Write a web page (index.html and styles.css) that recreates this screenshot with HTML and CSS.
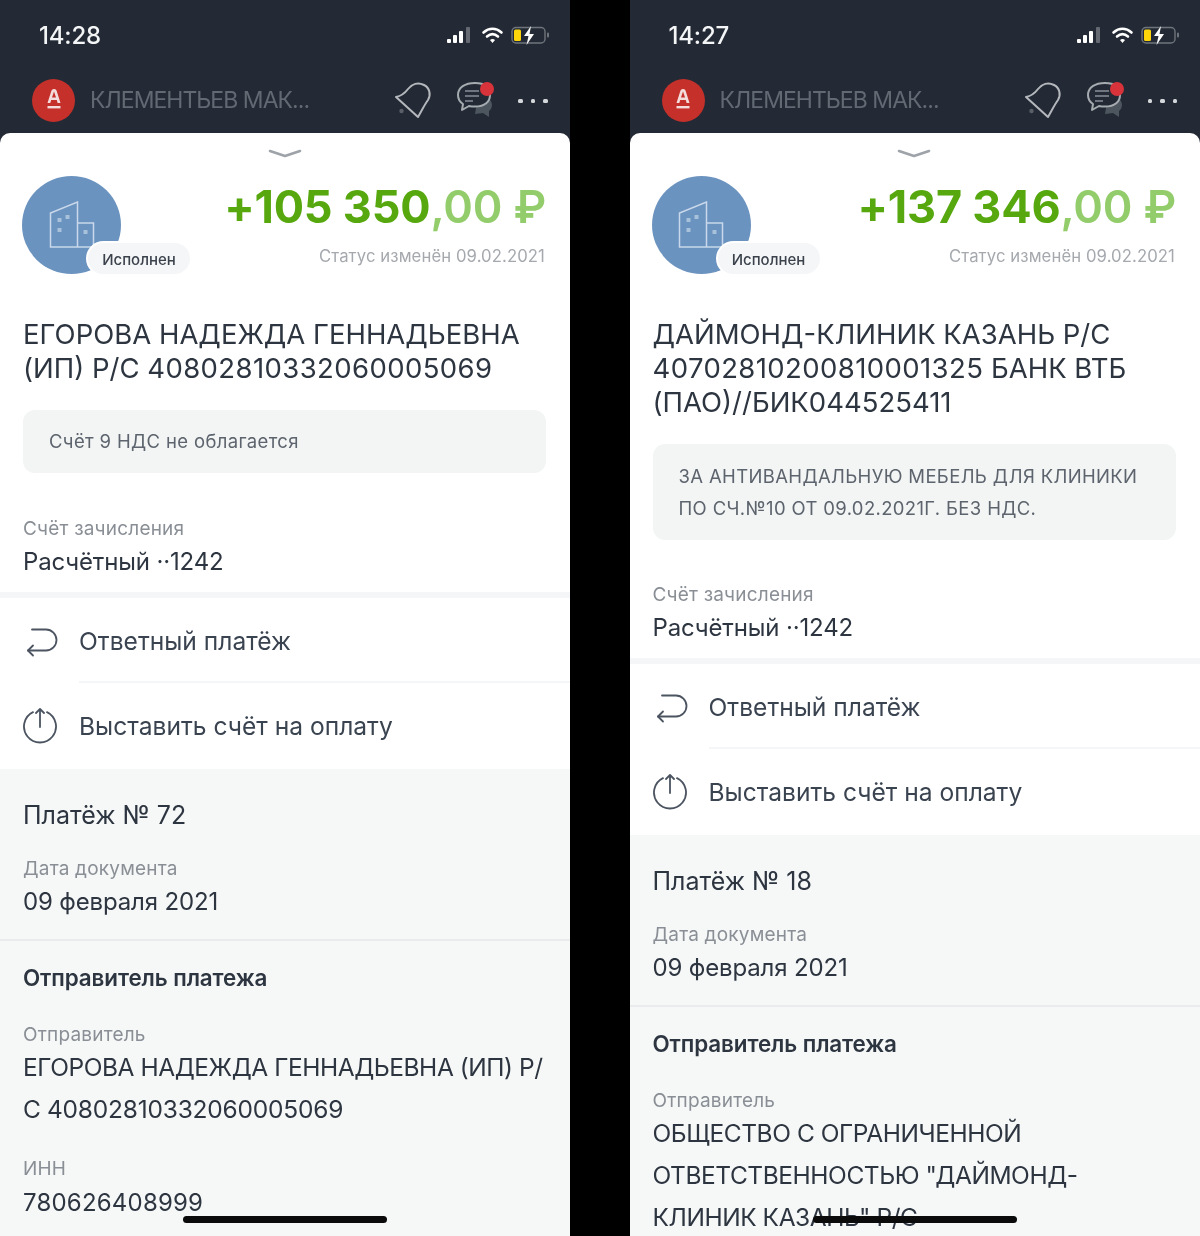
FILE: index.html
```html
<!DOCTYPE html>
<html lang="ru">
<head>
<meta charset="utf-8">
<title>Платежи</title>
<link rel="stylesheet" href="styles.css">
</head>
<body>
<main class="pair">

<section class="phone">
  <div class="top">
    <div class="status">
      <span class="time">14:28</span>
      <svg class="sysicons" width="106" height="24" viewBox="0 0 106 24"><g fill="#fff"><rect x="3" y="15" width="4" height="4" rx="1"/><rect x="9" y="11" width="4" height="8" rx="1"/><rect x="15" y="7" width="4" height="12" rx="1"/><rect x="22" y="3" width="4" height="16" rx="1" opacity=".3"/></g><g fill="none" stroke="#fff" stroke-width="2.6" stroke-linecap="round"><path d="M39.500 8.500c5.500-5 12.500-5 18 0"/><path d="M43 12.500c3.500-3 7.500-3 11 0"/></g><path d="M46 16c1.500-1.200 3.500-1.200 5 0l-2.500 3z" fill="#fff"/><rect x="68" y="3.500" width="33" height="15.500" rx="4" fill="none" stroke="#fff" stroke-opacity=".35" stroke-width="1.400"/><rect x="70" y="5.500" width="7" height="11.500" rx="1.500" fill="#ffd60a"/><path d="M87 2l-7 10h4.500l-2 9 7.500-11h-4.500z" fill="#fff"/><rect x="103" y="8.500" width="2" height="5" rx="1" fill="#fff" opacity=".35"/></svg>
    </div>
    <div class="bar">
      <span class="logo"><svg width="16" height="24" viewBox="0 0 16 24"><path d="M8 1c-2 0-2.600 1.500-3 3L1.500 15h2.800l.9-3h5.600l.8 3h2.900L11 4C10.500 2.300 10 1 8 1zM6 9.500 8 3.500l2 6z" fill="#f3dcdb"/><rect x="1.500" y="18" width="13" height="2.400" fill="#f3dcdb"/></svg></span>
      <span class="account">КЛЕМЕНТЬЕВ МАК...</span>
      <svg class="bell" width="38" height="38" viewBox="0 0 38 38" fill="none" stroke="#b4b8bd" stroke-width="2" stroke-linejoin="round"><path d="M2 16c5-1 9-4 12-8 4-5 10-7 16-4 6 3 7 10 4 15-3 4-6 10-10 17z"/><circle cx="7.500" cy="30" r="2.200" fill="#5b6068" stroke="none"/></svg>
      <span class="chat"><svg width="40" height="40" viewBox="0 0 40 40" fill="none"><path d="M22 16c8 0 14 3 14 9 0 3-1.500 5-3 6v6l-6-4-8 1z" fill="#4d555f"/><path d="M19 3C9 3 2 7.500 2 15c0 4 2 7 5 9l-1 6 7-4c2 .5 4 .6 6 .6 10 0 15-5 15-11.600C34 7.500 29 3 19 3z" fill="#232a35" stroke="#a6abb0" stroke-width="2" stroke-linejoin="round"/><path d="M9 11h14M9 16h14M9 21h8" stroke="#6f7680" stroke-width="2"/></svg><i class="dot"></i></span>
      <span class="dots"><i></i><i></i><i></i></span>
    </div>
  </div>
  <div class="sheet">
    <div class="main">
      <svg class="handle" width="34" height="10" viewBox="0 0 34 10" fill="none"><path d="M2 2l15 5 15-5" stroke="#9ea3a9" stroke-width="2.600" stroke-linecap="round" stroke-linejoin="round"/></svg>
      <div class="head">
        <div class="avatar">
          <svg width="46" height="48" viewBox="0 0 46 48" fill="none" stroke="#c9d8ea" stroke-width="1.500"><path d="M1.500 46V12L28.500 1v45zM28.500 22h16v24H1.500"/><g fill="#a9c2dc" stroke="none"><rect x="8.500" y="17" width="4" height="4"/><rect x="16.500" y="14" width="4" height="4"/><rect x="8.500" y="27" width="4" height="4"/><rect x="34.500" y="29" width="4" height="4"/></g></svg>
          <span class="badge">Исполнен</span>
        </div>
        <div class="sum">
          <div class="amount">+105 350<span class="minor">,00 ₽</span></div>
          <div class="changed">Статус изменён 09.02.2021</div>
        </div>
      </div>
      <h1 class="title">ЕГОРОВА НАДЕЖДА ГЕННАДЬЕВНА (ИП) Р/С <span class="num">40802810332060005069</span></h1>
      <div class="note">Счёт 9 НДС не облагается</div>
      <div class="field first"><span class="label">Счёт зачисления</span><span class="value">Расчётный ··1242</span></div>
    </div>
    <div class="actions">
      <div class="action">
        <svg width="34" height="34" viewBox="0 0 34 34" fill="none" stroke="#4b5460" stroke-width="1.800" stroke-linecap="round" stroke-linejoin="round"><path d="M9 5.500h14a10.500 10.500 0 0 1 0 21H5"/><path d="M10 21.500l-5 5 5 5"/></svg>
        <span>Ответный платёж</span>
      </div>
      <div class="action">
        <svg width="36" height="36" viewBox="0 0 36 36" fill="none" stroke="#4b5460" stroke-width="1.800" stroke-linecap="round" stroke-linejoin="round"><path d="M11 4.100A16 16 0 1 0 25 4.100"/><path d="M18 1v18M14 5l4-4 4 4"/></svg>
        <span>Выставить счёт на оплату</span>
      </div>
    </div>
    <div class="details">
      <div class="doc">
        <div class="docno">Платёж № 72</div>
        <div class="field"><span class="label">Дата документа</span><span class="value">09 февраля 2021</span></div>
      </div>
      <div class="sender">
        <h2 class="subhead">Отправитель платежа</h2>
        <span class="label">Отправитель</span>
        <div class="long">ЕГОРОВА НАДЕЖДА ГЕННАДЬЕВНА (ИП) Р/<br>С <span class="num">40802810332060005069</span></div>
        <span class="label inn">ИНН</span>
        <div class="value">780626408999</div>
      </div>
    </div>
  </div>
  <div class="home"></div>
</section>

<section class="phone">
  <div class="top">
    <div class="status">
      <span class="time">14:27</span>
      <svg class="sysicons" width="106" height="24" viewBox="0 0 106 24"><g fill="#fff"><rect x="3" y="15" width="4" height="4" rx="1"/><rect x="9" y="11" width="4" height="8" rx="1"/><rect x="15" y="7" width="4" height="12" rx="1"/><rect x="22" y="3" width="4" height="16" rx="1" opacity=".3"/></g><g fill="none" stroke="#fff" stroke-width="2.6" stroke-linecap="round"><path d="M39.500 8.500c5.500-5 12.500-5 18 0"/><path d="M43 12.500c3.500-3 7.500-3 11 0"/></g><path d="M46 16c1.500-1.200 3.500-1.200 5 0l-2.500 3z" fill="#fff"/><rect x="68" y="3.500" width="33" height="15.500" rx="4" fill="none" stroke="#fff" stroke-opacity=".35" stroke-width="1.400"/><rect x="70" y="5.500" width="7" height="11.500" rx="1.500" fill="#ffd60a"/><path d="M87 2l-7 10h4.500l-2 9 7.500-11h-4.500z" fill="#fff"/><rect x="103" y="8.500" width="2" height="5" rx="1" fill="#fff" opacity=".35"/></svg>
    </div>
    <div class="bar">
      <span class="logo"><svg width="16" height="24" viewBox="0 0 16 24"><path d="M8 1c-2 0-2.600 1.500-3 3L1.500 15h2.800l.9-3h5.600l.8 3h2.900L11 4C10.500 2.300 10 1 8 1zM6 9.500 8 3.500l2 6z" fill="#f3dcdb"/><rect x="1.500" y="18" width="13" height="2.400" fill="#f3dcdb"/></svg></span>
      <span class="account">КЛЕМЕНТЬЕВ МАК...</span>
      <svg class="bell" width="38" height="38" viewBox="0 0 38 38" fill="none" stroke="#b4b8bd" stroke-width="2" stroke-linejoin="round"><path d="M2 16c5-1 9-4 12-8 4-5 10-7 16-4 6 3 7 10 4 15-3 4-6 10-10 17z"/><circle cx="7.500" cy="30" r="2.200" fill="#5b6068" stroke="none"/></svg>
      <span class="chat"><svg width="40" height="40" viewBox="0 0 40 40" fill="none"><path d="M22 16c8 0 14 3 14 9 0 3-1.500 5-3 6v6l-6-4-8 1z" fill="#4d555f"/><path d="M19 3C9 3 2 7.500 2 15c0 4 2 7 5 9l-1 6 7-4c2 .5 4 .6 6 .6 10 0 15-5 15-11.600C34 7.500 29 3 19 3z" fill="#232a35" stroke="#a6abb0" stroke-width="2" stroke-linejoin="round"/><path d="M9 11h14M9 16h14M9 21h8" stroke="#6f7680" stroke-width="2"/></svg><i class="dot"></i></span>
      <span class="dots"><i></i><i></i><i></i></span>
    </div>
  </div>
  <div class="sheet">
    <div class="main">
      <svg class="handle" width="34" height="10" viewBox="0 0 34 10" fill="none"><path d="M2 2l15 5 15-5" stroke="#9ea3a9" stroke-width="2.600" stroke-linecap="round" stroke-linejoin="round"/></svg>
      <div class="head">
        <div class="avatar">
          <svg width="46" height="48" viewBox="0 0 46 48" fill="none" stroke="#c9d8ea" stroke-width="1.500"><path d="M1.500 46V12L28.500 1v45zM28.500 22h16v24H1.500"/><g fill="#a9c2dc" stroke="none"><rect x="8.500" y="17" width="4" height="4"/><rect x="16.500" y="14" width="4" height="4"/><rect x="8.500" y="27" width="4" height="4"/><rect x="34.500" y="29" width="4" height="4"/></g></svg>
          <span class="badge">Исполнен</span>
        </div>
        <div class="sum">
          <div class="amount">+137 346<span class="minor">,00 ₽</span></div>
          <div class="changed">Статус изменён 09.02.2021</div>
        </div>
      </div>
      <h1 class="title">ДАЙМОНД-КЛИНИК КАЗАНЬ Р/С <span class="num">40702810200810001325</span> БАНК ВТБ (ПАО)//БИК044525411</h1>
      <div class="note multi">ЗА АНТИВАНДАЛЬНУЮ МЕБЕЛЬ ДЛЯ КЛИНИКИ ПО СЧ.№10 ОТ 09.02.2021Г. БЕЗ НДС.</div>
      <div class="field first"><span class="label">Счёт зачисления</span><span class="value">Расчётный ··1242</span></div>
    </div>
    <div class="actions">
      <div class="action">
        <svg width="34" height="34" viewBox="0 0 34 34" fill="none" stroke="#4b5460" stroke-width="1.800" stroke-linecap="round" stroke-linejoin="round"><path d="M9 5.500h14a10.500 10.500 0 0 1 0 21H5"/><path d="M10 21.500l-5 5 5 5"/></svg>
        <span>Ответный платёж</span>
      </div>
      <div class="action">
        <svg width="36" height="36" viewBox="0 0 36 36" fill="none" stroke="#4b5460" stroke-width="1.800" stroke-linecap="round" stroke-linejoin="round"><path d="M11 4.100A16 16 0 1 0 25 4.100"/><path d="M18 1v18M14 5l4-4 4 4"/></svg>
        <span>Выставить счёт на оплату</span>
      </div>
    </div>
    <div class="details">
      <div class="doc">
        <div class="docno">Платёж № 18</div>
        <div class="field"><span class="label">Дата документа</span><span class="value">09 февраля 2021</span></div>
      </div>
      <div class="sender">
        <h2 class="subhead">Отправитель платежа</h2>
        <span class="label">Отправитель</span>
        <div class="long">ОБЩЕСТВО С ОГРАНИЧЕННОЙ ОТВЕТСТВЕННОСТЬЮ "ДАЙМОНД-<br>КЛИНИК КАЗАНЬ" Р/С</div>
      </div>
    </div>
  </div>
  <div class="home"></div>
</section>

</main>
</body>
</html>
```
FILE: styles.css
```css
* { box-sizing: border-box; }
html, body { margin: 0; padding: 0; background: #000; }
body { width: 1200px; height: 1236px; overflow: hidden; font-family: Inter, "Liberation Sans", sans-serif; color: #2d3540; }
.pair { display: grid; grid-template-columns: 570px 570.5px; column-gap: 59.5px; height: 1236px; }
.phone { position: relative; height: 1236px; overflow: hidden; background: #232a35; display: flex; flex-direction: column; filter: blur(.6px); }

.top { height: 133px; flex: none; padding: 0 22px 0 32px; color: #fff; }
.status { height: 70px; display: flex; justify-content: space-between; padding: 24px 0 0 7px; }
.time { font-size: 24px; line-height: 24px; font-weight: 500; letter-spacing: -.2px; color: #f4f5f6; }
.sysicons { margin-right: -2px; }
.bar { height: 44px; margin-top: 8px; display: flex; align-items: center; }
.logo { width: 43px; height: 43px; border-radius: 50%; background: #c5302a; display: flex; align-items: center; justify-content: center; flex: none; }
.account { margin-left: 15px; width: 304px; font-size: 23px; letter-spacing: -.95px; color: #626973; white-space: nowrap; }
.bell { flex: none; }
.chat { position: relative; width: 40px; height: 40px; margin-left: 24px; flex: none; }
.dot { position: absolute; left: 24px; top: 2px; width: 14px; height: 14px; border-radius: 50%; background: #d8333a; }
.dots { margin: 2px 0 0 22px; display: flex; gap: 8px; flex: none; }
.dots i { width: 4.500px; height: 4.500px; background: #d5d8db; border-radius: 1.500px; }

.sheet { flex: 1; background: #fff; border-radius: 10px 10px 0 0; display: flex; flex-direction: column; min-height: 0; }
.main { padding: 0 24px 0 23px; position: relative; }
.handle { display: block; margin: 16px auto 0; }
.head { display: flex; justify-content: space-between; margin-top: 17px; height: 98px; }
.avatar { position: relative; width: 99px; height: 98px; margin-left: -1px; border-radius: 50%; background: #6b93bf; display: flex; align-items: center; justify-content: center; }
.badge { position: absolute; left: 66px; top: 67px; width: 102px; height: 31px; border-radius: 16px; background: #f5f6f7; box-shadow: 0 0 0 2px #fff; font-size: 15px; font-weight: 500; line-height: 33px; text-align: center; color: #3b424c; }
.sum { text-align: right; padding-top: 3px; }
.amount { font-size: 45px; line-height: 56px; font-weight: 700; color: #57a80f; letter-spacing: -.2px; white-space: nowrap; }
.minor { color: #93cd6b; font-weight: 600; }
.changed { font-size: 16.700px; line-height: 20px; margin-top: 11px; color: #a5a9ae; letter-spacing: .1px; margin-right: 1px; }

.title { margin: 43px 0 0; font-size: 27.500px; line-height: 34px; font-weight: 400; letter-spacing: 0; color: #2d3540; }
.title .num { letter-spacing: .4px; }
.note { margin-top: 25px; height: 63px; padding: 0 26px 2px; display: flex; align-items: center; background: #f3f5f5; border-radius: 12px; font-size: 18.500px; letter-spacing: .35px; color: #5d646d; }
.note.multi { height: 96px; line-height: 32px; padding-bottom: 0; }
.field { display: flex; flex-direction: column; }
.field.first { margin-top: 45px; padding-bottom: 13px; }
.note.multi + .field.first { margin-top: 44px; }
.label { display: block; font-size: 19px; line-height: 22px; letter-spacing: .2px; color: #8a8f96; }
.value { display: block; font-size: 24px; line-height: 34px; letter-spacing: -.15px; color: #2d3540; margin-top: 5px; }

.actions { border-top: 6px solid #f5f6f7; padding-bottom: 1px; flex: none; }
.action { height: 85px; display: flex; align-items: center; padding-left: 22px; font-size: 24.600px; color: #3a4350; }
.action svg { flex: none; width: 36px; }
.action span { margin-left: 21px; flex: 1; height: 85px; line-height: 87px; border-bottom: 2px solid #f5f6f7; }
.action:last-child span { border-bottom: 0; }

.details { flex: 1; background: #f6f7f7; }
.doc { padding: 29px 23px 20px; border-bottom: 2px solid #e9ebec; }
.docno { font-size: 25px; line-height: 34px; color: #2d3540; }
.doc .field { margin-top: 26px; }
.sender { padding: 21px 16px 0 23px; }
.subhead { margin: 0; font-size: 22.400px; line-height: 32px; font-weight: 600; color: #2d3540; letter-spacing: -.1px; }
.sender .label { margin-top: 30px; }
.sender .label.inn { margin-top: 28px; }
.sender .value { margin-top: 6px; letter-spacing: .2px; }
.long { margin-top: 0; font-size: 24.500px; line-height: 42px; letter-spacing: -.45px; color: #2d3540; }
.long .num { letter-spacing: -.2px; }

.home { position: absolute; left: 183px; top: 1216px; width: 204px; height: 7px; border-radius: 4px; background: #0b0b0b; }
```
